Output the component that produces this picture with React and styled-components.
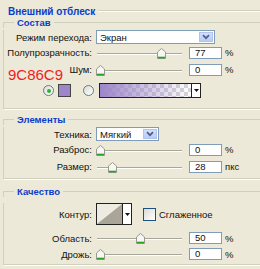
import React from "react";
import styled, { createGlobalStyle } from "styled-components";

const GlobalStyle = createGlobalStyle`
  body {
    margin: 0;
    background: #ECE9D8;
  }
`;

const Panel = styled.div`
  width: 260px;
  height: 269px;
  overflow: hidden;
  background: #ECE9D8;
  font-family: "Liberation Sans", Arial, sans-serif;
  font-size: 9.5px;
  color: #111;
`;

const TitleRow = styled.div`
  display: flex;
  align-items: center;
  height: 12px;
  padding: 5px 0 0 8px;
`;

const Title = styled.span`
  font-weight: bold;
  font-size: 10px;
  color: #0A3CCB;
  white-space: nowrap;
`;

const Rule = styled.div`
  flex: 1;
  margin-left: 3px;
  border-top: 1px solid #D0D0BF;
  border-bottom: 1px solid #fff;
`;

const Group = styled.section`
  margin: ${(p) => p.$top}px 0 0 3px;
  width: 270px;
`;

const GroupHead = styled.div`
  display: flex;
  height: 11px;

  &::before,
  &::after {
    content: "";
    align-self: flex-end;
    height: 5px;
    border-top: 1px solid #D0D0BF;
  }
  &::before {
    width: 10px;
    border-left: 1px solid #D0D0BF;
  }
  &::after {
    flex: 1;
  }
`;

const Legend = styled.span`
  padding: 0 3px;
  font-weight: bold;
  font-size: 9.5px;
  line-height: 11px;
  color: #0A3CCB;
  white-space: nowrap;
`;

const GroupBody = styled.div`
  padding-bottom: ${(p) => p.$bottom}px;
  border: 1px solid #D0D0BF;
  border-top: none;
  box-shadow: 1px 1px 0 #fff;
`;

const Row = styled.div`
  position: relative;
  display: flex;
  align-items: center;
  height: ${(p) => p.$h}px;
  margin-top: ${(p) => p.$mt || 0}px;
  padding-left: ${(p) => p.$pl || 0}px;
`;

const Label = styled.div`
  flex-shrink: 0;
  width: 88px;
  text-align: right;
  white-space: nowrap;
`;

const Hex = styled.span`
  position: absolute;
  left: 4px;
  top: 6px;
  font-size: 15px;
  line-height: 15px;
  color: #F21B1B;
`;

const Select = styled.div`
  margin-left: 4px;
  width: ${(p) => p.$w}px;
  height: 14px;
  box-sizing: border-box;
  border: 1px solid #7F9DB9;
  background: #fff;
  display: flex;
  align-items: center;
  justify-content: space-between;
  padding: 0 1px 0 3px;
`;

const DropBtn = styled.span`
  width: 14px;
  height: 10px;
  box-sizing: border-box;
  background: linear-gradient(#D2DFFD, #B9CBF6);
  border: 1px solid #B2C4EE;
  display: flex;
  align-items: center;
  justify-content: center;
`;

const Slider = styled.div`
  position: relative;
  flex-shrink: 0;
  margin-left: 4px;
  width: 87px;
  height: 100%;

  &::before {
    content: "";
    position: absolute;
    left: 1px;
    right: 1px;
    top: 50%;
    height: 1px;
    background: #A9A79C;
    border-bottom: 1px solid #fff;
  }
`;

const ThumbSvg = styled.svg`
  position: absolute;
  top: 50%;
  margin-top: -5px;
`;

const NumBox = styled.div`
  margin-left: 6px;
  width: 33px;
  height: 12px;
  box-sizing: border-box;
  border: 1px solid #7F9DB9;
  background: #fff;
  padding-left: 5px;
  line-height: 10px;
`;

const Unit = styled.span`
  margin-left: 3px;
`;

const Radio = styled.span`
  position: relative;
  flex-shrink: 0;
  margin-left: ${(p) => p.$ml}px;
  width: 11px;
  height: 11px;
  box-sizing: border-box;
  border-radius: 50%;
  border: 1px solid #5E7C9A;
  background: linear-gradient(135deg, #DCDBD2, #fff);

  &::after {
    content: "";
    display: ${(p) => (p.$on ? "block" : "none")};
    position: absolute;
    left: 2.5px;
    top: 2.5px;
    width: 4px;
    height: 4px;
    border-radius: 50%;
    background: #2DB22D;
  }
`;

const Swatch = styled.span`
  margin-left: 4px;
  width: 13px;
  height: 13px;
  box-sizing: border-box;
  border: 1px solid #444;
  background: #9C86C9;
`;

const GradientPicker = styled.div`
  margin-left: 5px;
  width: 102px;
  height: 15px;
  box-sizing: border-box;
  border: 1px solid #222;
  display: flex;
`;

const GradientFill = styled.div`
  flex: 1;
  background-image: linear-gradient(to right, #9C86C9, rgba(156, 134, 201, 0.55) 45%, rgba(156, 134, 201, 0)),
    conic-gradient(#D6D6D6 25%, #fff 0 50%, #D6D6D6 0 75%, #fff 0);
  background-size: 100% 100%, 8px 8px;
`;

const ArrowPart = styled.div`
  width: 8px;
  border-left: 1px solid #222;
  background: #fff;
  display: flex;
  align-items: center;
  justify-content: center;
`;

const ContourBox = styled.div`
  margin-left: 4px;
  width: 36px;
  height: 22px;
  box-sizing: border-box;
  border: 1px solid #222;
  display: flex;
`;

const ContourPreview = styled.svg`
  flex: 1;
  display: block;
`;

const CheckBox = styled.span`
  margin-left: 11px;
  width: 13px;
  height: 13px;
  box-sizing: border-box;
  border: 1px solid #1C5180;
  background: linear-gradient(135deg, #DCDBD3, #fff);
`;

const CheckLabel = styled.span`
  margin-left: 3px;
`;

const Chevron = () => (
  <svg width="8" height="6" viewBox="0 0 8 6">
    <path d="M1 1.2 L4 4.2 L7 1.2" fill="none" stroke="#4D6185" strokeWidth="1.7" />
  </svg>
);

const DownTriangle = () => (
  <svg width="5" height="3" viewBox="0 0 5 3">
    <path d="M0 0 H5 L2.5 3 Z" fill="#111" />
  </svg>
);

const Range = ({ pos }) => (
  <Slider>
    <ThumbSvg width="9" height="11" viewBox="0 0 9 11" style={{ left: `${pos * 79}px` }}>
      <path d="M0.5 4 L4.5 0.5 L8.5 4 V10.5 H0.5 Z" fill="#F6F6F2" stroke="#9A998F" />
      <path d="M1 9.5 H8" stroke="#22A622" strokeWidth="1.6" />
    </ThumbSvg>
  </Slider>
);

const SliderRow = ({ label, pos, value, unit = "%", h = 17, mt, children }) => (
  <Row $h={h} $mt={mt}>
    {children}
    <Label>{label}</Label>
    <Range pos={pos} />
    <NumBox>{value}</NumBox>
    <Unit>{unit}</Unit>
  </Row>
);

const Box = ({ title, top, bottom, children }) => (
  <Group $top={top}>
    <GroupHead>
      <Legend>{title}</Legend>
    </GroupHead>
    <GroupBody $bottom={bottom}>{children}</GroupBody>
  </Group>
);

export default function App() {
  return (
    <Panel>
      <GlobalStyle />
      <TitleRow>
        <Title>Внешний отблеск</Title>
        <Rule />
      </TitleRow>

      <Box title="Состав" top={0} bottom={10}>
        <Row $h={14} $mt={2}>
          <Label>Режим перехода:</Label>
          <Select $w={119}>
            Экран
            <DropBtn>
              <Chevron />
            </DropBtn>
          </Select>
        </Row>
        <SliderRow label="Полупрозрачность:" pos={0.77} value="77" />
        <SliderRow label="Шум:" pos={0} value="0">
          <Hex>9C86C9</Hex>
        </SliderRow>
        <Row $h={15} $mt={5} $pl={39}>
          <Radio $ml={0} $on />
          <Swatch />
          <Radio $ml={12} />
          <GradientPicker>
            <GradientFill />
            <ArrowPart>
              <DownTriangle />
            </ArrowPart>
          </GradientPicker>
        </Row>
      </Box>

      <Box title="Элементы" top={5} bottom={3}>
        <Row $h={14} $mt={2}>
          <Label>Техника:</Label>
          <Select $w={63}>
            Мягкий
            <DropBtn>
              <Chevron />
            </DropBtn>
          </Select>
        </Row>
        <SliderRow label="Разброс:" pos={0} value="0" />
        <SliderRow label="Размер:" pos={0.15} value="28" unit="пкс" />
      </Box>

      <Box title="Качество" top={7} bottom={2}>
        <Row $h={22} $mt={6}>
          <Label>Контур:</Label>
          <ContourBox>
            <ContourPreview viewBox="0 0 26 20" preserveAspectRatio="none">
              <rect width="26" height="20" fill="#EEECE2" />
              <path d="M0 20 L26 0 V20 Z" fill="#A9A598" />
            </ContourPreview>
            <ArrowPart>
              <DownTriangle />
            </ArrowPart>
          </ContourBox>
          <CheckBox />
          <CheckLabel>Сглаженное</CheckLabel>
        </Row>
        <SliderRow label="Область:" pos={0.5} value="50" h={16} mt={5} />
        <SliderRow label="Дрожь:" pos={0} value="0" h={16} />
      </Box>
    </Panel>
  );
}
